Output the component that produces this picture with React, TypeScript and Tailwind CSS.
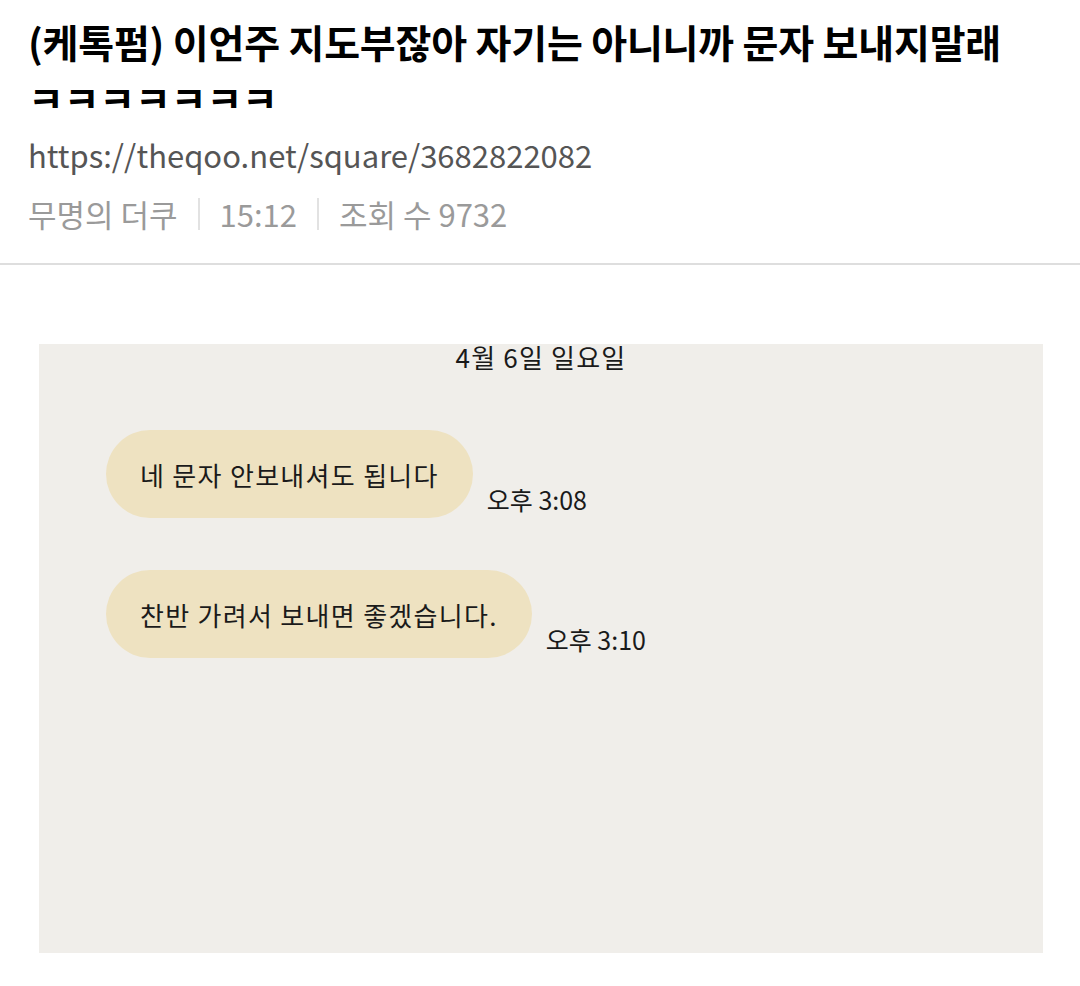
const kr = "font-['Noto_Sans_CJK_KR','Noto_Sans',sans-serif]";

function Bubble({ text, time }: { text: string; time: string }) {
  return (
    <div className="flex items-end gap-[14px]">
      <div className="h-[88px] rounded-full bg-[#eee2c1] px-[34px] flex items-center text-[26px] text-[#1a1a1a] tracking-[1.3px]">
        {text}
      </div>
      <span className="text-[25px] leading-none pb-[6px] text-[#1a1a1a]">{time}</span>
    </div>
  );
}

export default function App() {
  return (
    <div className={`w-[1080px] h-[986px] bg-white ${kr}`}>
      {/* Header */}
      <div className="px-[28px]">
        <div className="h-[108px] overflow-hidden pt-[13px]">
          <h1 className="text-[39px] font-bold leading-[57px] text-black tracking-[-0.2px] break-keep">
            (케톡펌) 이언주 지도부잖아 자기는 아니니까 문자 보내지말래 ㅋㅋㅋㅋㅋㅋㅋ
          </h1>
        </div>
        <p className="mt-[26px] text-[31px] leading-[42px] text-[#555]">
          https://theqoo.net/square/3682822082
        </p>
        <div className="mt-[17px] flex items-center text-[31px] leading-[42px] text-[#9a9a9a]">
          <span>무명의 더쿠</span>
          <span className="mx-[20px] w-[2px] h-[32px] bg-[#e2e2e2]" />
          <span>15:12</span>
          <span className="mx-[20px] w-[2px] h-[32px] bg-[#e2e2e2]" />
          <span>조회 수 9732</span>
        </div>
      </div>
      <div className="mt-[28px] h-[2px] bg-[#dedede]" />

      {/* Screenshot */}
      <div className="mt-[79px] ml-[39px] w-[1004px] h-[609px] bg-[#f0eeea] overflow-hidden">
        <div className="-mt-[5px] text-center text-[26px] leading-[36px] text-[#1a1a1a] tracking-[1.2px]">
          4월 6일 일요일
        </div>
        <div className="mt-[55px] pl-[67px] flex flex-col gap-[52px]">
          <Bubble text="네 문자 안보내셔도 됩니다" time="오후 3:08" />
          <Bubble text="찬반 가려서 보내면 좋겠습니다." time="오후 3:10" />
        </div>
      </div>
    </div>
  );
}
